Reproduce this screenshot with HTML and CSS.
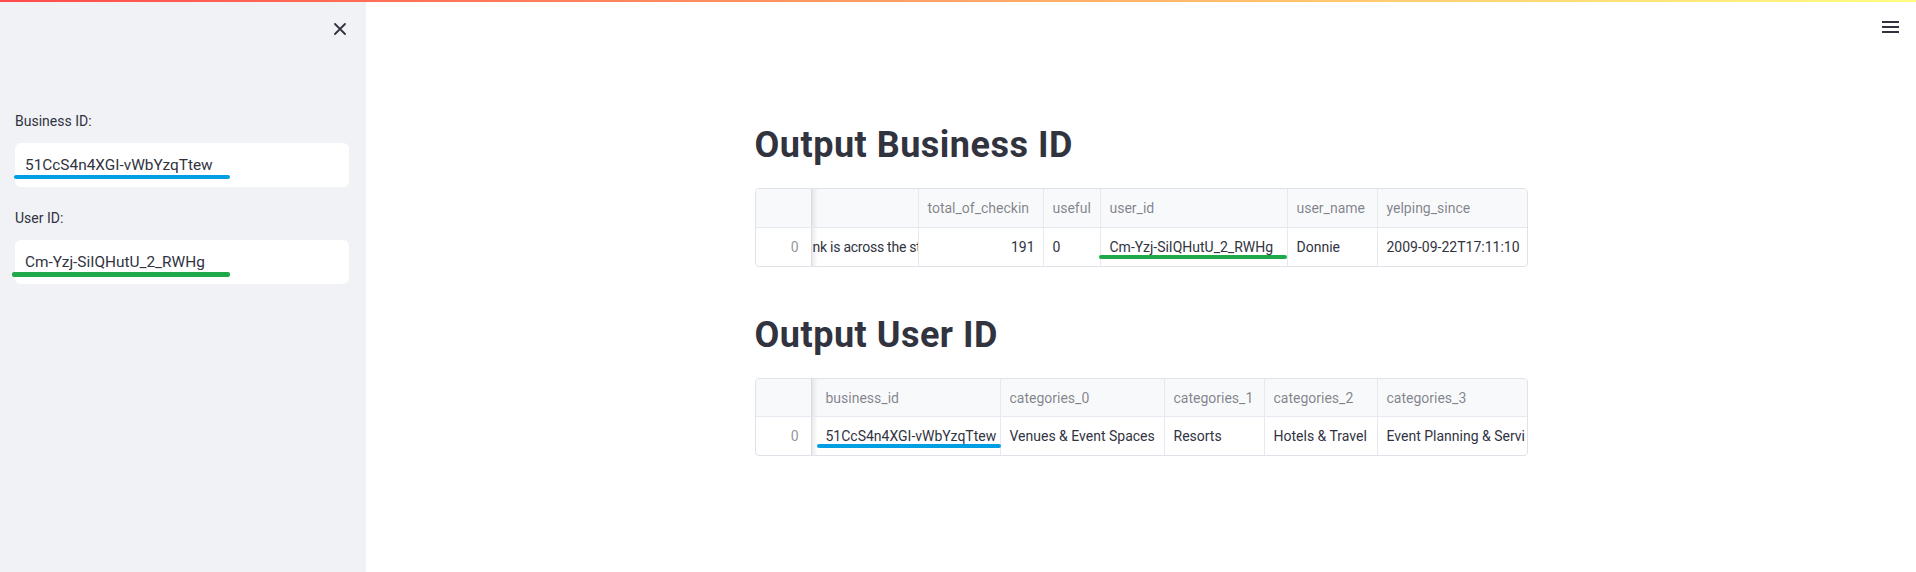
FILE: index.html
```html
<!DOCTYPE html>
<html lang="en">
<head>
<meta charset="utf-8">
<title>Output</title>
<link rel="stylesheet" href="styles.css">
</head>
<body>
<div class="topbar"></div>
<div class="app">
  <aside class="sidebar">
    <div class="sb-head">
      <svg class="close" width="12" height="12" viewBox="0 0 12 12"><path d="M1 1 L11 11 M11 1 L1 11" stroke="#31333F" stroke-width="1.8" stroke-linecap="round" fill="none"/></svg>
    </div>
    <div class="widget first">
      <div class="lbl">Business ID:</div>
      <div class="input"><span class="val">51CcS4n4XGI-vWbYzqTtew</span><span class="mark blue sb-blue"></span></div>
    </div>
    <div class="widget">
      <div class="lbl">User ID:</div>
      <div class="input"><span class="val">Cm-Yzj-SiIQHutU_2_RWHg</span><span class="mark green sb-green"></span></div>
    </div>
  </aside>
  <main class="main">
    <div class="main-head">
      <svg width="17" height="12" viewBox="0 0 17 12"><rect x="0" y="0" width="17" height="2" fill="#31333F"/><rect x="0" y="5" width="17" height="2" fill="#31333F"/><rect x="0" y="10" width="17" height="2" fill="#31333F"/></svg>
    </div>
    <div class="content">
      <h2 class="title">Output Business ID</h2>
      <div class="grid g1">
        <div class="c hd idx"></div>
        <div class="c hd shade"></div>
        <div class="c hd">total_of_checkin</div>
        <div class="c hd">useful</div>
        <div class="c hd">user_id</div>
        <div class="c hd">user_name</div>
        <div class="c hd last">yelping_since</div>
        <div class="c idx num">0</div>
        <div class="c shade scrolled">nk is across the st</div>
        <div class="c num">191</div>
        <div class="c">0</div>
        <div class="c ov">Cm-Yzj-SiIQHutU_2_RWHg<span class="mark green t-green"></span></div>
        <div class="c">Donnie</div>
        <div class="c last">2009-09-22T17:11:10</div>
      </div>
      <h2 class="title">Output User ID</h2>
      <div class="grid g2">
        <div class="c hd idx"></div>
        <div class="c hd shade wide">business_id</div>
        <div class="c hd">categories_0</div>
        <div class="c hd">categories_1</div>
        <div class="c hd">categories_2</div>
        <div class="c hd last">categories_3</div>
        <div class="c idx num">0</div>
        <div class="c shade wide ov">51CcS4n4XGI-vWbYzqTtew<span class="mark blue t-blue"></span></div>
        <div class="c">Venues &amp; Event Spaces</div>
        <div class="c">Resorts</div>
        <div class="c">Hotels &amp; Travel</div>
        <div class="c last">Event Planning &amp; Servi</div>
      </div>
    </div>
  </main>
</div>
</body>
</html>
```
FILE: styles.css
```css
* { box-sizing: border-box; }
html, body { margin: 0; padding: 0; }
body {
  font-family: Roboto, "Open Sans", sans-serif;
  color: #31333F;
  background: #ffffff;
  width: 1916px;
  height: 572px;
  overflow: hidden;
}
.topbar {
  height: 2px;
  background: linear-gradient(90deg, rgb(255, 75, 75), rgb(255, 253, 128));
}
.app {
  display: flex;
  height: 570px;
}
.sidebar {
  width: 366px;
  flex: none;
  background: #f0f2f6;
  padding: 0 17px 0 15px;
  display: flex;
  flex-direction: column;
}
.sb-head {
  display: flex;
  justify-content: flex-end;
  padding-top: 21px;
  padding-right: 3px;
}
.close { display: block; }
.widget { margin-top: 21px; }
.widget.first { margin-top: 76px; }
.lbl {
  font-size: 14px;
  line-height: 20px;
  height: 20px;
  margin-bottom: 12px;
}
.input {
  position: relative;
  height: 44px;
  background: #ffffff;
  border-radius: 6px;
  display: flex;
  align-items: center;
  padding-left: 10px;
}
.val {
  font-size: 15.4px;
  color: #31333F;
  white-space: nowrap;
}
.mark {
  position: absolute;
  display: block;
  border-radius: 2px;
}
.blue { background: #009fe3; }
.green { background: #1fa94b; }
.sb-blue { left: -1px; top: 32px; width: 216px; height: 4px; }
.sb-green { left: -3px; top: 32px; width: 218px; height: 5px; }
.main {
  flex: 1;
  display: flex;
  flex-direction: column;
}
.main-head {
  display: flex;
  justify-content: flex-end;
  padding: 19px 17px 0 0;
}
.main-head svg { display: block; }
.content {
  width: 773px;
  margin: 0 auto;
  padding-top: 90px;
}
.title {
  font-size: 36px;
  line-height: 44px;
  font-weight: 700;
  letter-spacing: 0.5px;
  margin: 0 0 21px 0;
  color: #31333F;
}
.grid {
  display: grid;
  border: 1px solid #dfe2e8;
  border-radius: 4px;
  overflow: hidden;
  grid-template-rows: 39px 38px;
  font-size: 14px;
}
.g1 { grid-template-columns: 56px 107px 125px 57px 187px 90px 1fr; margin-bottom: 46px; }
.g2 { grid-template-columns: 56px 189px 164px 100px 113px 1fr; grid-template-rows: 38px 38px; }
.c {
  position: relative;
  display: flex;
  align-items: center;
  padding: 0 8px 0 9px;
  border-right: 1px solid #e6e9ef;
  white-space: nowrap;
  overflow: hidden;
  color: #31333F;
}
.c.last { border-right: none; }
.c.ov { overflow: visible; }
.hd {
  background: #f8f9fb;
  color: rgba(49, 51, 63, 0.6);
  border-bottom: 1px solid #e6e9ef;
}
.idx {
  border-right: 1px solid #d8dbe1;
  color: rgba(49, 51, 63, 0.55);
}
.num { justify-content: flex-end; padding-right: 8px; }
.idx.num { padding-right: 12px; }
.shade::before {
  content: "";
  position: absolute;
  left: 0;
  top: 0;
  bottom: 0;
  width: 6px;
  background: linear-gradient(90deg, rgba(0, 0, 0, 0.08), rgba(0, 0, 0, 0));
  z-index: 1;
}
.scrolled { padding-left: 1px; padding-right: 0; letter-spacing: -0.25px; }
.wide { padding-left: 14px; }
.t-green { left: -2px; top: 27px; width: 188px; height: 4px; }
.t-blue { left: 5px; top: 27px; width: 184px; height: 4px; }
```
